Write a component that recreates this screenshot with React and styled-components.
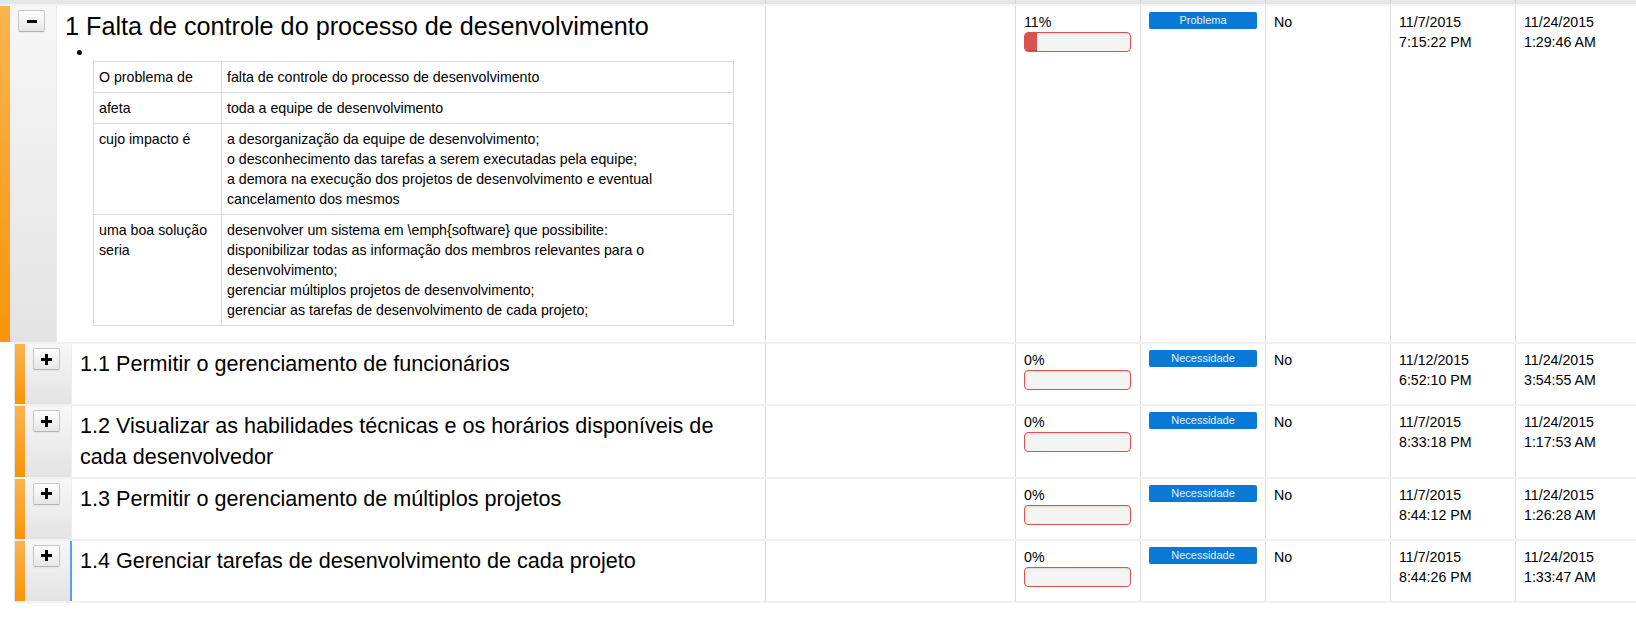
import React from "react";
import styled, { createGlobalStyle } from "styled-components";

const GlobalStyle = createGlobalStyle`
  html, body { margin: 0; padding: 0; background: #fff; }
  body { font-family: "Liberation Sans", Arial, sans-serif; color: #000; }
  * { box-sizing: border-box; }
`;

const COLS = "10px 47px 1fr 250px 125px 125px 125px 125px 121px";

const Page = styled.div`
  width: 1636px;
`;

const HeaderStrip = styled.div`
  display: grid;
  grid-template-columns: 765px 250px 125px 125px 125px 125px 1fr;
  height: 6px;
  background: #e6e6e6;
  border-bottom: 2px solid #f2f2f2;
`;

const HeaderCell = styled.div`
  border-left: 1px solid ${(p) => (p.$first ? "transparent" : "#d3d3d3")};
`;

const Row = styled.div`
  box-sizing: content-box;
  display: grid;
  grid-template-columns: ${COLS};
  min-height: ${(p) => (p.$child ? "60px" : "0")};
  margin-left: ${(p) => (p.$child ? "14px" : "0")};
  border-left: ${(p) => (p.$child ? "1px solid #e2e2e2" : "none")};
  border-top: ${(p) => (p.$child ? "2px solid #f1f1f1" : "none")};
  border-bottom: ${(p) => (p.$last ? "2px solid #f1f1f1" : "none")};
`;

const StatusBar = styled.div`
  background: linear-gradient(to bottom, #fbb450, #f89406);
`;

const ToggleCell = styled.div`
  background: linear-gradient(to bottom, #f7f7f7, #e3e3e3);
  border-right: ${(p) => (p.$focused ? "2px solid #5a9cf6" : "1px solid #ececec")};
  padding: 4px 0 0 8px;
`;

const ToggleButton = styled.button`
  width: 27px;
  height: 22px;
  padding: 0;
  display: flex;
  align-items: center;
  justify-content: center;
  border: 1px solid #c8c8c8;
  border-bottom-color: #b3b3b3;
  border-radius: 2px;
  background: linear-gradient(to bottom, #ffffff, #e6e6e6);
  box-shadow: inset 0 1px 0 rgba(255, 255, 255, 0.2), 0 1px 2px rgba(0, 0, 0, 0.05);
  cursor: pointer;
`;

const TitleCell = styled.div`
  padding: ${(p) => (p.$child ? "5px" : "3px")} 7px 5px 8px;
  min-width: 0;
`;

const Title = styled.div`
  font-size: ${(p) => (p.$child ? "21.6px" : "25.2px")};
  line-height: 1.4;
  color: #000;
`;

const BulletLine = styled.div`
  height: 17px;
  display: flex;
  align-items: center;
  padding-left: 12px;
`;

const Dot = styled.span`
  width: 5px;
  height: 5px;
  border-radius: 50%;
  background: #000;
`;

const InfoTable = styled.table`
  border-collapse: collapse;
  table-layout: fixed;
  width: 640px;
  margin: 0 0 11px 28px;
  font-size: 14.2px;
  line-height: 20px;
  color: #000;
`;

const InfoCell = styled.td`
  border: 1px solid #dadada;
  padding: 5px 5px;
  vertical-align: top;
`;

const Cell = styled.div`
  border-left: 1px solid #dcdcdc;
  padding: 6px 8px;
  font-size: 14.2px;
  line-height: 20px;
  color: #000;
`;

const ProgressTrack = styled.div`
  width: 107px;
  height: 20px;
  border: 1px solid #d9534f;
  border-radius: 4px;
  background: #f4f4f4;
  box-shadow: inset 0 1px 2px rgba(0, 0, 0, 0.1);
  overflow: hidden;
`;

const ProgressFill = styled.div`
  height: 100%;
  background: #d9534f;
  box-shadow: inset 0 -1px 0 rgba(0, 0, 0, 0.15);
`;

const Badge = styled.div`
  height: 17px;
  border-radius: 2px;
  background: #0a79d6;
  color: #e4f1fc;
  font-size: 11px;
  line-height: 17px;
  text-align: center;
`;

const MinusIcon = () => (
  <svg width="10" height="3" viewBox="0 0 10 3">
    <rect x="0" y="0" width="10" height="3" fill="#000" />
  </svg>
);

const PlusIcon = () => (
  <svg width="11" height="11" viewBox="0 0 11 11">
    <rect x="4" y="0" width="3" height="11" fill="#000" />
    <rect x="0" y="4" width="11" height="3" fill="#000" />
  </svg>
);

const infoRows = [
  ["O problema de", ["falta de controle do processo de desenvolvimento"]],
  ["afeta", ["toda a equipe de desenvolvimento"]],
  [
    "cujo impacto é",
    [
      "a desorganização da equipe de desenvolvimento;",
      "o desconhecimento das tarefas a serem executadas pela equipe;",
      "a demora na execução dos projetos de desenvolvimento e eventual cancelamento dos mesmos",
    ],
  ],
  [
    "uma boa solução seria",
    [
      "desenvolver um sistema em \\emph{software} que possibilite:",
      "disponibilizar todas as informação dos membros relevantes para o desenvolvimento;",
      "gerenciar múltiplos projetos de desenvolvimento;",
      "gerenciar as tarefas de desenvolvimento de cada projeto;",
    ],
  ],
];

const children = [
  {
    title: "1.1 Permitir o gerenciamento de funcionários",
    created: ["11/12/2015", "6:52:10 PM"],
    modified: ["11/24/2015", "3:54:55 AM"],
  },
  {
    title: "1.2 Visualizar as habilidades técnicas e os horários disponíveis de cada desenvolvedor",
    created: ["11/7/2015", "8:33:18 PM"],
    modified: ["11/24/2015", "1:17:53 AM"],
  },
  {
    title: "1.3 Permitir o gerenciamento de múltiplos projetos",
    created: ["11/7/2015", "8:44:12 PM"],
    modified: ["11/24/2015", "1:26:28 AM"],
  },
  {
    title: "1.4 Gerenciar tarefas de desenvolvimento de cada projeto",
    created: ["11/7/2015", "8:44:26 PM"],
    modified: ["11/24/2015", "1:33:47 AM"],
    focused: true,
  },
];

const DataCells = ({ percent, type, created, modified }) => (
  <>
    <Cell />
    <Cell>
      {percent}%
      <ProgressTrack>
        <ProgressFill style={{ width: `${percent}%` }} />
      </ProgressTrack>
    </Cell>
    <Cell>
      <Badge>{type}</Badge>
    </Cell>
    <Cell>No</Cell>
    <Cell>
      {created[0]}
      <br />
      {created[1]}
    </Cell>
    <Cell>
      {modified[0]}
      <br />
      {modified[1]}
    </Cell>
  </>
);

export default function App() {
  return (
    <Page>
      <GlobalStyle />
      <HeaderStrip>
        <HeaderCell $first />
        <HeaderCell />
        <HeaderCell />
        <HeaderCell />
        <HeaderCell />
        <HeaderCell />
        <HeaderCell />
      </HeaderStrip>
      <Row>
        <StatusBar />
        <ToggleCell>
          <ToggleButton aria-label="Recolher">
            <MinusIcon />
          </ToggleButton>
        </ToggleCell>
        <TitleCell>
          <Title>1 Falta de controle do processo de desenvolvimento</Title>
          <BulletLine>
            <Dot />
          </BulletLine>
          <InfoTable>
            <colgroup>
              <col style={{ width: "128px" }} />
              <col style={{ width: "512px" }} />
            </colgroup>
            <tbody>
              {infoRows.map(([label, lines]) => (
                <tr key={label}>
                  <InfoCell>{label}</InfoCell>
                  <InfoCell>
                    {lines.map((l, i) => (
                      <React.Fragment key={i}>
                        {i > 0 && <br />}
                        {l}
                      </React.Fragment>
                    ))}
                  </InfoCell>
                </tr>
              ))}
            </tbody>
          </InfoTable>
        </TitleCell>
        <DataCells
          percent={11}
          type="Problema"
          created={["11/7/2015", "7:15:22 PM"]}
          modified={["11/24/2015", "1:29:46 AM"]}
        />
      </Row>
      {children.map((c, i) => (
        <Row key={c.title} $child $last={i === children.length - 1}>
          <StatusBar />
          <ToggleCell $focused={c.focused}>
            <ToggleButton aria-label="Expandir">
              <PlusIcon />
            </ToggleButton>
          </ToggleCell>
          <TitleCell $child>
            <Title $child>{c.title}</Title>
          </TitleCell>
          <DataCells percent={0} type="Necessidade" created={c.created} modified={c.modified} />
        </Row>
      ))}
    </Page>
  );
}
